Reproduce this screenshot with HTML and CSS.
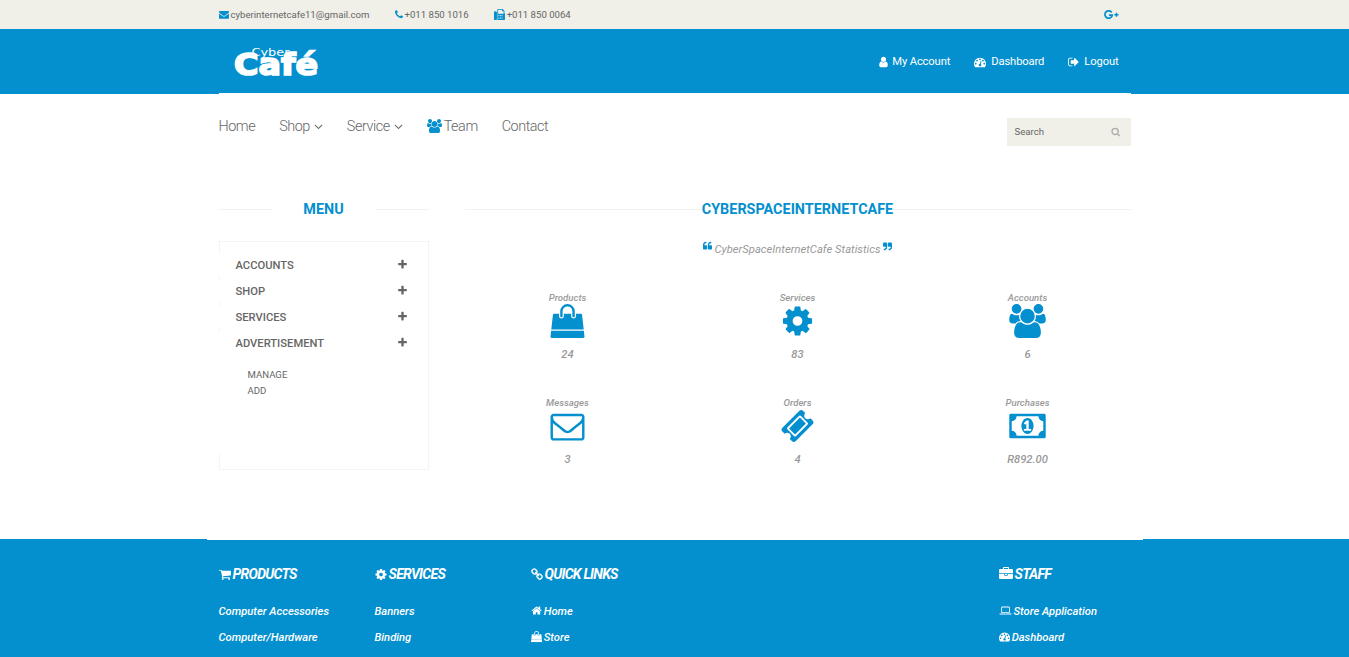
FILE: index.html
```html
<!DOCTYPE html>
<html lang="en">
<head>
<meta charset="utf-8">
<title>CyberSpaceInternetCafe</title>
<link rel="stylesheet" href="styles.css">
</head>
<body>
<svg class="sprite" aria-hidden="true">
<symbol id="envelope" viewBox="0 0 1792 1792"><path d="M1792 710v794q0 66-47 113t-113 47h-1472q-66 0-113-47t-47-113v-794q44 49 101 87 362 246 497 345 57 42 92.5 65.5t94.5 48 110 24.5h2q51 0 110-24.5t94.5-48 92.5-65.5q170-123 498-345 57-39 100-87zm0-294q0 79-49 151t-122 123q-376 261-468 325-10 7-42.5 31t-54 38.5-52 32.5-57.5 27-50 9h-2q-23 0-50-9t-57.5-27-52-32.5-54-38.5-42.5-31q-91-64-262-182.5t-205-142.5q-62-42-117-115.5t-55-136.5q0-78 41.5-130t118.5-52h1472q65 0 112.5 47t47.5 113z"/></symbol>
<symbol id="phone" viewBox="192 0 1408 1792"><path d="M1600 1240q0 27-10 70.5t-21 68.5q-21 50-122 106-94 51-186 51-27 0-52.5-3.5t-57.5-12.5-47.5-14.5-55.5-20.5-49-18q-98-35-175-83-128-79-264.5-215.5t-215.5-264.5q-48-77-83-175-3-9-18-49t-20.5-55.5-14.5-47.5-12.5-57.5-3.5-52.5q0-92 51-186 56-101 106-122 25-11 68.5-21t70.5-10q14 0 21 3 18 6 53 76 11 19 30 54t35 63.5 31 53.5q3 4 17.5 25t21.5 35.5 7 28.5q0 20-28.5 50t-62 55-62 53-28.5 46q0 9 5 22.5t8.5 20.5 14 24 11.5 19q76 137 174 235t235 174q2 1 19 11.5t24 14 20.5 8.5 22.5 5q18 0 46-28.5t53-62 55-62 50-28.5q14 0 28.5 7t35.5 21.5 25 17.5q25 15 53.5 31t63.5 35 54 30q70 35 76 53 3 7 3 21z"/></symbol>
<symbol id="fax" viewBox="0 0 1792 1792"><path fill-rule="evenodd" d="M160 384h160q66 0 113 47t47 113v1088q0 66-47 113t-113 47h-160q-66 0-113-47t-47-113v-1088q0-66 47-113t113-47zM544 1632v-1536q0-40 28-68t68-28h672q40 0 88 20t76 48l152 152q28 28 48 76t20 88v256q96 56 96 165v827q0 66-47 113t-113 47h-928q-66 0-113-47t-47-113zM672 128v640h896v-384h-160q-40 0-68-28t-28-68v-160zM736 992v128h128v-128zM992 992v128h128v-128zM1248 992v128h128v-128zM736 1248v128h128v-128zM992 1248v128h128v-128zM1248 1248v128h128v-128zM736 1504v128h128v-128zM992 1504v128h128v-128zM1248 1504v128h128v-128z"/></symbol>
<symbol id="gplus" viewBox="0 0 16 10"><path d="M7.700 2.400A3.700 3.700 0 1 0 8.300 5.100H4.900" fill="none" stroke="currentColor" stroke-width="1.700"/><path d="M11.700 2.700h1.500v1.300h1.300v1.400h-1.300v1.300h-1.500V5.400h-1.300V4h1.300z"/></symbol>
<symbol id="user" viewBox="256 0 1280 1792"><path d="M1536 1399q0 109-62.500 187t-150.500 78h-854q-88 0-150.500-78t-62.500-187q0-85 8.500-160.500t31.500-152 58.500-131 94-89 134.500-34.500q131 128 313 128t313-128q76 0 134.500 34.500t94 89 58.500 131 31.500 152 8.500 160.500zm-256-887q0 159-112.500 271.500t-271.500 112.500-271.500-112.500-112.500-271.500 112.500-271.500 271.500-112.500 271.500 112.500 112.500 271.500z"/></symbol>
<symbol id="dash" viewBox="0 0 1792 1792"><path d="M384 1152q0-53-37.500-90.500t-90.500-37.500-90.500 37.500-37.500 90.500 37.500 90.500 90.500 37.500 90.500-37.500 37.500-90.500zm192-448q0-53-37.500-90.500t-90.500-37.500-90.500 37.500-37.500 90.500 37.500 90.500 90.500 37.500 90.500-37.500 37.500-90.500zm428 481l101-382q6-26-7.500-48.500t-38.500-29.500-48 6.500-30 39.500l-101 382q-60 5-107 43.500t-63 98.500q-20 77 20 146t117 89 146-20 89-117q16-60-6-117t-72-91zm660-33q0-53-37.500-90.500t-90.500-37.500-90.500 37.500-37.500 90.500 37.500 90.500 90.500 37.500 90.500-37.500 37.500-90.500zm-640-640q0-53-37.500-90.500t-90.500-37.500-90.500 37.500-37.500 90.500 37.500 90.500 90.500 37.500 90.500-37.500 37.500-90.500zm448 192q0-53-37.500-90.500t-90.500-37.500-90.500 37.500-37.500 90.500 37.500 90.500 90.500 37.500 90.500-37.500 37.500-90.500zm320 448q0 261-141 483-19 29-54 29h-1402q-35 0-54-29-141-221-141-483 0-182 71-348t191-286 286-191 348-71 348 71 286 191 191 286 71 348z"/></symbol>
<symbol id="logout" viewBox="64 0 1600 1792"><path d="M704 1440q0 4 1 20t.5 26.500-3 23.500-10 19.500-20.500 6.500h-320q-119 0-203.500-84.500t-84.500-203.500v-704q0-119 84.500-203.500t203.500-84.500h320q13 0 22.500 9.500t9.500 22.500q0 4 1 20t.5 26.500-3 23.500-10 19.500-20.500 6.500h-320q-66 0-113 47t-47 113v704q0 66 47 113t113 47h312l11.500 1 11.500 3 8 5.500 7 9 2 13.500zm928-544q0 26-19 45l-544 544q-19 19-45 19t-45-19-19-45v-288h-448q-26 0-45-19t-19-45v-384q0-26 19-45t45-19h448v-288q0-26 19-45t45-19 45 19l544 544q19 19 19 45z"/></symbol>
<symbol id="angle" viewBox="320 0 1152 1792"><path d="M1395 736q0 13-10 23l-466 466q-10 10-23 10t-23-10l-466-466q-10-10-10-23t10-23l50-50q10-10 23-10t23 10l393 393 393-393q10-10 23-10t23 10l50 50q10 10 10 23z"/></symbol>
<symbol id="group" viewBox="-64 0 1920 1792"><path d="M529 896q-162 5-265 128h-134q-82 0-138-40.500t-56-118.500q0-353 124-353 6 0 43.500 21t97.500 42.500 119 21.500q67 0 133-23-5 37-5 66 0 139 81 256zm1071 637q0 120-73 189.500t-194 69.500h-874q-121 0-194-69.500t-73-189.500q0-53 3.500-103.500t14-109 26.500-108.500 43-97.500 62-81 85.500-53.500 111.500-20q10 0 43 21.500t73 48 107 48 135 21.500 135-21.500 107-48 73-48 43-21.500q61 0 111.500 20t85.500 53.500 62 81 43 97.500 26.500 108.500 14 109 3.500 103.500zm-1024-1277q0 106-75 181t-181 75-181-75-75-181 75-181 181-75 181 75 75 181zm704 384q0 159-112.500 271.500t-271.500 112.500-271.500-112.500-112.500-271.500 112.500-271.500 271.500-112.500 271.500 112.500 112.500 271.500zm576 225q0 78-56 118.500t-138 40.500h-134q-103-123-265-128 81-117 81-256 0-29-5-66 66 23 133 23 59 0 119-21.500t97.500-42.500 43.500-21q124 0 124 353zm-128-609q0 106-75 181t-181 75-181-75-75-181 75-181 181-75 181 75 75 181z"/></symbol>
<symbol id="search" viewBox="64 0 1664 1792"><path d="M1216 832q0-185-131.500-316.500t-316.500-131.500-316.500 131.500-131.500 316.500 131.500 316.500 316.500 131.500 316.500-131.500 131.500-316.500zm512 832q0 52-38 90t-90 38q-54 0-90-38l-343-342q-179 124-399 124-143 0-273.500-55.500t-225-150-150-225-55.500-273.500 55.500-273.500 150-225 225-150 273.500-55.500 273.500 55.500 225 150 150 225 55.500 273.500q0 220-124 399l343 343q37 37 37 90z"/></symbol>
<symbol id="plus" viewBox="192 0 1408 1792"><path d="M1600 736v192q0 40-28 68t-68 28h-416v416q0 40-28 68t-68 28h-192q-40 0-68-28t-28-68v-416h-416q-40 0-68-28t-28-68v-192q0-40 28-68t68-28h416v-416q0-40 28-68t68-28h192q40 0 68 28t28 68v416h416q40 0 68 28t28 68z"/></symbol>
<symbol id="quote" viewBox="64 0 1664 1792"><path d="M832 960v384q0 80-56 136t-136 56h-384q-80 0-136-56t-56-136v-704q0-104 40.500-198.500t109.500-163.500 163.500-109.500 198.500-40.500h64q26 0 45 19t19 45v128q0 26-19 45t-45 19h-64q-106 0-181 75t-75 181v32q0 40 28 68t68 28h224q80 0 136 56t56 136zm896 0v384q0 80-56 136t-136 56h-384q-80 0-136-56t-56-136v-704q0-104 40.500-198.500t109.500-163.500 163.500-109.500 198.500-40.500h64q26 0 45 19t19 45v128q0 26-19 45t-45 19h-64q-106 0-181 75t-75 181v32q0 40 28 68t68 28h224q80 0 136 56t56 136z"/></symbol>
<symbol id="bag" viewBox="0 0 1792 1792"><path d="M1757 1408l35 313q3 28-16 50-19 21-48 21h-1664q-29 0-48-21-19-22-16-50l35-313h1722zm-93-839l86 775h-1708l86-775q3-24 21-40.500t43-16.500h256v128q0 53 37.500 90.500t90.500 37.500 90.500-37.500 37.500-90.500v-128h384v128q0 53 37.500 90.500t90.500 37.500 90.500-37.500 37.500-90.500v-128h256q25 0 43 16.500t21 40.500zm-384-185v256q0 26-19 45t-45 19-45-19-19-45v-256q0-106-75-181t-181-75-181 75-75 181v256q0 26-19 45t-45 19-45-19-19-45v-256q0-159 112.500-271.500t271.500-112.500 271.500 112.500 112.500 271.500z"/></symbol>
<symbol id="cog" viewBox="128 0 1536 1792"><path d="M1152 896q0-106-75-181t-181-75-181 75-75 181 75 181 181 75 181-75 75-181zm512-109v222q0 12-8 23t-20 13l-185 28q-19 54-39 91 35 50 107 138 10 12 10 25t-9 23q-27 37-99 108t-94 71q-12 0-26-9l-138-108q-44 23-91 38-16 136-29 186-7 28-36 28h-222q-14 0-24.500-8.500t-11.500-21.500l-28-184q-49-16-90-37l-141 107q-10 9-25 9-14 0-25-11-126-114-165-168-7-10-7-23 0-12 8-23 15-21 51-66.500t54-70.500q-27-50-41-99l-183-27q-13-2-21-12.500t-8-23.500v-222q0-12 8-23t19-13l186-28q14-46 39-92-40-57-107-138-10-12-10-24 0-10 9-23 26-36 98.500-107.500t94.500-71.500q13 0 26 10l138 107q44-23 91-38 16-136 29-186 7-28 36-28h222q14 0 24.500 8.500t11.500 21.500l28 184q49 16 90 37l142-107q9-9 24-9 13 0 25 10 129 119 165 170 7 8 7 22 0 12-8 23-15 21-51 66.500t-54 70.500q26 50 41 98l183 28q13 2 21 12.500t8 23.500z"/></symbol>
<symbol id="mail" viewBox="0 0 1792 1792"><path d="M1664 1504v-768q-32 36-69 66-268 206-426 338-51 43-83 67t-86.500 48.500-102.500 24.500h-2q-48 0-102.500-24.500t-86.500-48.500-83-67q-158-132-426-338-37-30-69-66v768q0 13 9.500 22.500t22.500 9.500h1472q13 0 22.500-9.500t9.500-22.500zm0-1051v-24.500l-.5-13-3-12.500-5.500-9-9-7.500-14-2.500h-1472q-13 0-22.500 9.500t-9.500 22.500q0 168 147 284 193 152 401 317 6 5 35 29.500t46 37.500 44.500 31.500 50.500 27.500 43 9h2q20 0 43-9t50.500-27.500 44.500-31.500 46-37.500 35-29.500q208-165 401-317 54-43 100.500-115.500t46.500-131.500zm128-37v1088q0 66-47 113t-113 47h-1472q-66 0-113-47t-47-113v-1088q0-66 47-113t113-47h1472q66 0 113 47t47 113z"/></symbol>
<symbol id="ticket" viewBox="64 0 1664 1792"><path d="M1024 452l316 316-572 572-316-316zm-211 979l618-618q19-19 19-45t-19-45l-362-362q-18-18-45-18t-45 18l-618 618q-19 19-19 45t19 45l362 362q18 18 45 18t45-18zm889-637l-907 908q-37 37-90.500 37t-90.500-37l-126-126q56-56 56-136t-56-136-136-56-136 56l-125-126q-37-37-37-90.500t37-90.500l907-906q37-37 90.500-37t90.500 37l125 125q-56 56-56 136t56 136 136 56 136-56l126 125q37 37 37 90.500t-37 90.500z"/></symbol>
<symbol id="money" viewBox="-64 0 1920 1792"><path d="M704 1152h384v-96h-128v-448h-114l-148 137 77 80q42-37 55-57h2v288h-128v96zm512-256q0 70-21 142t-59.500 134-101.500 101-138 39-138-39-101.500-101-59.500-134-21-142 21-142 59.500-134 101.500-101 138-39 138 39 101.500 101 59.500 134 21 142zm512 256v-512q-106 0-181-75t-75-181h-1152q0 106-75 181t-181 75v512q106 0 181 75t75 181h1152q0-106 75-181t181-75zm128-832v1152q0 26-19 45t-45 19h-1792q-26 0-45-19t-19-45v-1152q0-26 19-45t45-19h1792q26 0 45 19t19 45z"/></symbol>
<symbol id="cart" viewBox="64 0 1664 1792"><path d="M704 1536q0 52-38 90t-90 38-90-38-38-90 38-90 90-38 90 38 38 90zm896 0q0 52-38 90t-90 38-90-38-38-90 38-90 90-38 90 38 38 90zm128-1088v512q0 24-16.500 42.500t-40.500 21.500l-1044 122q13 60 13 70 0 16-24 64h920q26 0 45 19t19 45-19 45-45 19h-1024q-26 0-45-19t-19-45q0-11 8-31.500t16-36 21.500-40 15.500-29.500l-177-823h-204q-26 0-45-19t-19-45 19-45 45-19h256q16 0 28.500 6.500t19.500 15.500 13 24.500 8 26 5.500 29.500 4.500 26h1201q26 0 45 19t19 45z"/></symbol>
<symbol id="link" viewBox="64 0 1664 1792"><path d="M1520 1216q0-40-28-68l-208-208q-28-28-68-28-42 0-72 32 3 3 19 18.500t21.500 21.500 15 19 13 25.500 3.500 27.500q0 40-28 68t-68 28q-15 0-27.500-3.500t-25.500-13-19-15-21.500-21.500-18.500-19q-33 31-33 73 0 40 28 68l206 207q27 27 68 27 40 0 68-26l147-146q28-28 28-67zm-703-705q0-40-28-68l-206-207q-28-28-68-28-39 0-68 27l-147 146q-28 28-28 67 0 40 28 68l208 208q27 27 68 27 42 0 72-31-3-3-19-18.500t-21.500-21.500-15-19-13-25.500-3.500-27.500q0-40 28-68t68-28q15 0 27.500 3.500t25.500 13 19 15 21.500 21.500 18.500 19q33-31 33-73zm895 705q0 120-85 203l-147 146q-83 83-203 83-121 0-204-85l-206-207q-83-83-83-203 0-123 88-209l-88-88q-86 88-208 88-120 0-204-84l-208-208q-84-84-84-204t85-203l147-146q83-83 203-83 121 0 204 85l206 207q83 83 83 203 0 123-88 209l88 88q86-88 208-88 120 0 204 84l208 208q84 84 84 204z"/></symbol>
<symbol id="home" viewBox="64 0 1664 1792"><path d="M1472 992v480q0 26-19 45t-45 19h-384v-384h-256v384h-384q-26 0-45-19t-19-45v-480q0-1 .5-3t.5-3l575-474 575 474q1 2 1 6zm223-69l-62 74q-8 9-21 11h-3q-13 0-21-7l-692-577-692 577q-12 8-24 7-13-2-21-11l-62-74q-8-10-7-23.500t11-21.500l719-599q32-26 76-26t76 26l244 204v-195q0-14 9-23t23-9h192q14 0 23 9t9 23v408l219 182q10 8 11 21.500t-7 23.500z"/></symbol>
<symbol id="case" viewBox="0 0 1792 1792"><path d="M640 256h512v-128h-512v128zm1152 640v480q0 66-47 113t-113 47h-1472q-66 0-113-47t-47-113v-480h672v160q0 26 19 45t45 19h320q26 0 45-19t19-45v-160h672zm-768 0v128h-256v-128h256zm768-480v384h-1792v-384q0-66 47-113t113-47h352v-160q0-40 28-68t68-28h576q40 0 68 28t28 68v160h352q66 0 113 47t47 113z"/></symbol>
<symbol id="laptop" viewBox="0 0 1920 1792"><path d="M416 1280q-66 0-113-47t-47-113v-704q0-66 47-113t113-47h1088q66 0 113 47t47 113v704q0 66-47 113t-113 47h-1088zm-32-864v704q0 13 9.500 22.500t22.500 9.500h1088q13 0 22.500-9.500t9.500-22.500v-704q0-13-9.500-22.500t-22.500-9.500h-1088q-13 0-22.500 9.500t-9.500 22.500zm1376 928h160v96q0 40-47 68t-113 28h-1600q-66 0-113-28t-47-68v-96h1760zm-720 96q16 0 16-16t-16-16h-160q-16 0-16 16t16 16h160z"/></symbol>
</svg>

<div class="topbar"><div class="container">
  <span class="contact"><svg class="ic"><use href="#envelope"/></svg>cyberinternetcafe11@gmail.com</span>
  <span class="contact"><svg class="ic narrow"><use href="#phone"/></svg>+011 850 1016</span>
  <span class="contact"><svg class="ic fax"><use href="#fax"/></svg>+011 850 0064</span>
  <svg class="gplus"><use href="#gplus"/></svg>
</div></div>

<header class="header"><div class="container">
  <svg class="logo" viewBox="0 0 84 32">
    <text class="logo-small" x="16.500" y="9.500" textLength="38" lengthAdjust="spacingAndGlyphs">Cyber</text>
    <text class="logo-big" x="-1" y="28.500" textLength="84" lengthAdjust="spacingAndGlyphs">Café</text>
  </svg>
  <div class="account">
    <span><svg class="ic user"><use href="#user"/></svg>My Account</span>
    <span><svg class="ic dash"><use href="#dash"/></svg>Dashboard</span>
    <span><svg class="ic out"><use href="#logout"/></svg>Logout</span>
  </div>
</div></header>

<nav class="nav">
  <div class="links">
    <span>Home</span>
    <span class="drop">Shop <svg class="ic"><use href="#angle"/></svg></span>
    <span class="drop">Service <svg class="ic"><use href="#angle"/></svg></span>
    <span><svg class="ic team"><use href="#group"/></svg>Team</span>
    <span>Contact</span>
  </div>
  <div class="search"><span>Search</span><svg class="ic"><use href="#search"/></svg></div>
</nav>

<main class="main">
  <aside class="side">
    <h2 class="title menu-title"><span>MENU</span></h2>
    <div class="menu">
      <div class="item"><span>ACCOUNTS</span><svg class="ic"><use href="#plus"/></svg></div>
      <div class="item"><span>SHOP</span><svg class="ic"><use href="#plus"/></svg></div>
      <div class="item"><span>SERVICES</span><svg class="ic"><use href="#plus"/></svg></div>
      <div class="item open"><span>ADVERTISEMENT</span><svg class="ic"><use href="#plus"/></svg></div>
      <div class="sub"><span>MANAGE</span><span>ADD</span></div>
    </div>
  </aside>
  <section class="content">
    <h2 class="title"><span>CYBERSPACEINTERNETCAFE</span></h2>
    <p class="tagline"><svg class="ic"><use href="#quote"/></svg><span>CyberSpaceInternetCafe Statistics</span><svg class="ic flip"><use href="#quote"/></svg></p>
    <div class="stats">
      <div class="stat"><span>Products</span><svg><use href="#bag"/></svg><b>24</b></div>
      <div class="stat"><span>Services</span><svg><use href="#cog"/></svg><b>83</b></div>
      <div class="stat"><span>Accounts</span><svg><use href="#group"/></svg><b>6</b></div>
      <div class="stat"><span>Messages</span><svg><use href="#mail"/></svg><b>3</b></div>
      <div class="stat"><span>Orders</span><svg><use href="#ticket"/></svg><b>4</b></div>
      <div class="stat"><span>Purchases</span><svg><use href="#money"/></svg><b>R892.00</b></div>
    </div>
  </section>
</main>

<footer class="footer"><div class="columns">
  <div class="col"><h3><svg class="ic"><use href="#cart"/></svg>PRODUCTS</h3><p>Computer Accessories</p><p>Computer/Hardware</p></div>
  <div class="col"><h3><svg class="ic"><use href="#cog"/></svg>SERVICES</h3><p>Banners</p><p>Binding</p></div>
  <div class="col"><h3><svg class="ic"><use href="#link"/></svg>QUICK LINKS</h3><p><svg class="ic"><use href="#home"/></svg>Home</p><p><svg class="ic"><use href="#bag"/></svg>Store</p></div>
  <div class="col staff"><h3><svg class="ic case"><use href="#case"/></svg>STAFF</h3><p><svg class="ic laptop"><use href="#laptop"/></svg>Store Application</p><p><svg class="ic"><use href="#dash"/></svg>Dashboard</p><p><svg class="ic peek"><use href="#group"/></svg></p></div>
</div></footer>
</body>
</html>
```
FILE: styles.css
```css
* { box-sizing: border-box; }
html, body { margin: 0; height: 657px; overflow: hidden; }
body { font-family: Roboto, "Liberation Sans", sans-serif; font-size: 11.2px; color: #666; background: #fff; }
svg { fill: currentColor; display: block; flex: none; }
.sprite { display: none; }
h2, h3, p { margin: 0; }
.ic { width: 1em; height: 1em; }
.container { width: 912px; margin: 0 auto; display: flex; align-items: center; height: 100%; }

.topbar { height: 29px; background: #f0efe8; font-size: 9.6px; }
.contact { display: flex; align-items: center; gap: 2px; margin-right: 25px; }
.contact .ic { color: #048fce; width: 10px; height: 11px; }
.contact .narrow { width: 8px; }
.contact .fax { width: 11px; height: 11px; }
.gplus { width: 16px; height: 10px; color: #048fce; margin-left: auto; margin-right: 11px; }

.header { height: 65px; background: #048fce; color: #fff; }
.logo { width: 84px; height: 32px; margin-left: 16px; overflow: visible; }
.logo-small { font: 11px "DejaVu Sans", sans-serif; }
.logo-big { font: bold 29.5px "DejaVu Sans", sans-serif; stroke: #fff; stroke-width: 1.7px; }
.account { margin-left: auto; display: flex; gap: 24px; margin-right: 12px; letter-spacing: -.12px; }
.account span { display: flex; align-items: center; gap: 5px; }
.account .user { width: 9px; height: 12px; margin-right: -.5px; }
.account .dash { width: 12px; height: 12px; }
.account .out { width: 11px; height: 12px; }

.nav { width: 912px; height: 86px; margin: -1px auto 0; position: relative; background: #fff; display: flex; justify-content: space-between; padding-top: 25px; }
.links { display: flex; gap: 24px; font-size: 14.4px; font-weight: 300; line-height: 17px; letter-spacing: -.45px; }
.links span { display: flex; align-items: center; gap: 2px; height: 17px; }
.links .drop { gap: 4px; }
.links .ic { width: 9px; height: 15px; }
.links .team { width: 15px; height: 14px; margin-top: -2px; color: #048fce; }
.search { width: 124px; height: 28px; background: #f0efe8; display: flex; align-items: center; justify-content: space-between; padding: 0 10px 0 8px; font-size: 9.6px; }
.search span { line-height: 12px; padding-bottom: 1px; }
.search .ic { color: #acaca8; }

.main { width: 912px; height: 360px; margin: 0 auto; padding-top: 20px; display: flex; gap: 36px; }
.side { width: 210px; }
.content { width: 666px; }
.title { height: 20px; font-size: 14.4px; font-weight: 700; color: #048fce; display: flex; align-items: center; }
.title span { line-height: 18px; padding-top: 2px; }
.title::before, .title::after { content: ""; flex: 1; height: 1px; background: #f3f2ee; }
.menu-title span { width: 104px; text-align: center; }
.menu { margin-top: 22px; height: 229px; border: 1px solid #f5f5ef; padding-top: 12px; }
.item { height: 22px; margin: 0 20px 4px -1px; padding-left: 17px; background: #fff; display: flex; justify-content: space-between; align-items: center; font-weight: 500; }
.item.open { margin-bottom: 0; }
.item .ic { width: 9px; height: 11px; margin: 0 1px 2px 0; }
.sub { height: 100px; margin-left: -1px; background: #fff; display: flex; flex-direction: column; font-size: 9.6px; line-height: 16px; padding: 13px 0 0 29px; }
.tagline { display: flex; justify-content: center; gap: 2px; margin-top: 23px; height: 16px; line-height: 16px; font-style: italic; color: #999; letter-spacing: .03px; }
.tagline .ic { width: 9px; height: 10px; margin-top: -1px; color: #048fce; }
.flip { transform: rotate(180deg); }
.stats { width: 690px; margin: 34px -12px 0; display: grid; grid-template-columns: repeat(3, 230px); grid-auto-rows: 105px; }
.stat { display: flex; flex-direction: column; align-items: center; font-style: italic; color: #999; }
.stat span { font-size: 9.6px; font-weight: 500; line-height: 11px; margin-bottom: 1px; }
.stat svg { width: 37px; height: 34px; color: #048fce; }
.stat b { font-weight: 500; line-height: 14px; margin-top: 10px; }

.footer { height: 118px; background: #048fce; color: #fff; font-style: italic; }
.columns { width: 936px; height: 118px; margin: 0 auto; border-top: 1px solid #fff; padding: 23px 12px 0; display: flex; }
.col { width: 156px; flex: none; }
.staff { margin-left: 312px; white-space: nowrap; }
.col h3 { display: flex; align-items: center; gap: 2px; height: 22px; margin-bottom: 13px; font-size: 14px; font-weight: 700; letter-spacing: -.72px; }
.col h3 .ic { width: 12px; height: 13px; }
.col h3 .case { width: 14px; height: 14px; }
.col .laptop { width: 13px; }
.col .peek { width: 12px; height: 14px; }
.col p { display: flex; align-items: center; gap: 2px; height: 26px; font-weight: 500; }
```
